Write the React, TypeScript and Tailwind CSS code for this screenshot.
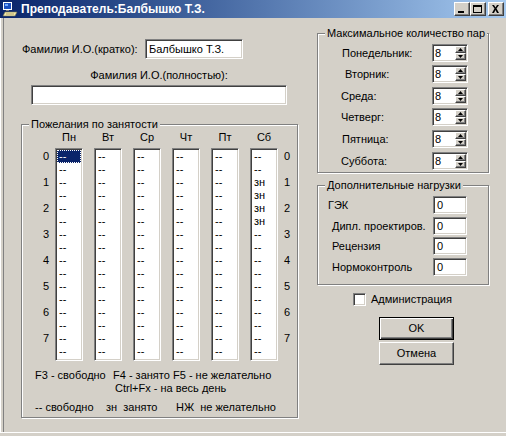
import React from 'react';

const days = ['Пн', 'Вт', 'Ср', 'Чт', 'Пт', 'Сб'];
const hours = [0, 1, 2, 3, 4, 5, 6, 7];

const sunken =
  'border border-t-[#808080] border-l-[#808080] border-b-white border-r-white shadow-[inset_1px_1px_#404040,inset_-1px_-1px_#d4d0c8]';
const raised =
  'border border-t-white border-l-white border-b-[#404040] border-r-[#404040] shadow-[inset_-1px_-1px_#808080]';
const etched = 'border border-[#808080] shadow-[1px_1px_#fff,inset_1px_1px_#fff]';

const maxRows = [
  { label: 'Понедельник:', pad: 'pl-[24px]', gap: 'mt-0' },
  { label: 'Вторник:', pad: 'pl-[27px]', gap: 'mt-[3px]' },
  { label: 'Среда:', pad: 'pl-[23px]', gap: 'mt-[4px]' },
  { label: 'Четверг:', pad: 'pl-[23px]', gap: 'mt-[3px]' },
  { label: 'Пятница:', pad: 'pl-[24px]', gap: 'mt-[4px]' },
  { label: 'Суббота:', pad: 'pl-[23px]', gap: 'mt-[4px]' },
];

const extraRows = [
  { label: 'ГЭК', pad: 'pl-[10px]', gap: 'mt-0' },
  { label: 'Дипл. проектиров.', pad: 'pl-[14px]', gap: 'mt-[3px]' },
  { label: 'Рецензия', pad: 'pl-[14px]', gap: 'mt-[2px]' },
  { label: 'Нормоконтроль', pad: 'pl-[14px]', gap: 'mt-[3px]' },
];

function cells(day: string) {
  return Array.from({ length: 16 }, (_, i) => (day === 'Сб' && i >= 2 && i <= 5 ? 'зн' : '--'));
}

function TitleIcon() {
  return (
    <svg width="16" height="16" viewBox="0 0 16 16">
      <rect x="1" y="1" width="9" height="8" fill="#fff" />
      <rect x="2" y="2" width="7" height="6" fill="#1a4fc0" />
      <rect x="3" y="3" width="3" height="2" fill="#6fa8ff" />
      <rect x="4" y="9" width="3" height="1" fill="#808080" />
      <polygon points="3,11 15,11 13,15 1,15" fill="#f4e9a8" stroke="#707050" strokeWidth="0.6" />
      <line x1="4" y1="13" x2="12" y2="13" stroke="#a09060" strokeWidth="0.8" />
    </svg>
  );
}

function CaptionButton({ kind }: { kind: 'min' | 'max' | 'close' }) {
  return (
    <div className={`w-[16px] h-[14px] bg-[#d4d0c8] ${raised} flex items-center justify-center`}>
      <svg width="12" height="10" viewBox="0 0 12 10">
        {kind === 'min' && <rect x="2" y="7" width="6" height="2" fill="#000" />}
        {kind === 'max' && (
          <>
            <rect x="1.5" y="1.5" width="8" height="7" fill="none" stroke="#000" strokeWidth="1" />
            <rect x="1" y="1" width="9" height="2" fill="#000" />
          </>
        )}
        {kind === 'close' && (
          <path d="M2 1 L4 1 L5.5 3.5 L7 1 L9 1 L6.5 4.5 L9 9 L7 9 L5.5 6 L4 9 L2 9 L4.5 4.5 Z" fill="#000" />
        )}
      </svg>
    </div>
  );
}

function SpinBox() {
  return (
    <div className={`w-[36px] h-[18px] bg-white ${sunken} p-[1px] flex`}>
      <div className="flex-1 pl-[1px] leading-[14px]">8</div>
      <div className="w-[11px] flex flex-col">
        <div className={`flex-1 bg-[#d4d0c8] ${raised} flex items-center justify-center`}>
          <svg width="5" height="3" viewBox="0 0 5 3">
            <polygon points="2.5,0 5,3 0,3" fill="#000" />
          </svg>
        </div>
        <div className={`flex-1 bg-[#d4d0c8] ${raised} flex items-center justify-center`}>
          <svg width="5" height="3" viewBox="0 0 5 3">
            <polygon points="0,0 5,0 2.5,3" fill="#000" />
          </svg>
        </div>
      </div>
    </div>
  );
}

function GroupTitle({ children }: { children: React.ReactNode }) {
  return (
    <span className="absolute -top-[7px] left-[7px] px-[2px] bg-[#d4d0c8] leading-[13px] whitespace-nowrap">
      {children}
    </span>
  );
}

export default function App() {
  return (
    <div className="w-[506px] h-[436px] bg-[#d4d0c8] flex flex-col overflow-hidden text-[11px] leading-[13px] text-black font-['Liberation_Sans',Arial,sans-serif]">
      {/* Title bar */}
      <div className="h-[18px] shrink-0 flex items-center bg-gradient-to-r from-[#0a246a] to-[#a6caf0] pl-[2px] pr-[2px]">
        <TitleIcon />
        <div className="ml-[3px] font-bold text-white text-[12px] whitespace-nowrap">Преподаватель:Балбышко Т.З.</div>
        <div className="ml-auto flex items-center">
          <CaptionButton kind="min" />
          <CaptionButton kind="max" />
          <div className="ml-[2px]">
            <CaptionButton kind="close" />
          </div>
        </div>
      </div>

      {/* Body */}
      <div className="h-[414px] shrink-0 flex shadow-[inset_1px_0_#fff,inset_3px_0_#d4d0c8,inset_4px_0_#808080]">
        {/* Left column */}
        <div className="w-[300px] shrink-0 pl-[21px]">
          <div className="mt-[21px] h-[20px] flex items-center">
            <div className="w-[124px] pl-[1px] whitespace-nowrap">Фамилия И.О.(кратко):</div>
            <div className={`w-[98px] h-[20px] bg-white ${sunken} pl-[3px] flex items-center`}>Балбышко Т.З.</div>
          </div>
          <div className="ml-[10px] w-[256px]">
            <div className="mt-[10px] text-center">Фамилия И.О.(полностью):</div>
            <div className={`mt-[3px] h-[20px] bg-white ${sunken}`} />
          </div>

          {/* Schedule wishes */}
          <div className={`relative mt-[19px] w-[277px] h-[294px] ${etched}`}>
            <GroupTitle>Пожелания по занятости</GroupTitle>
            <div className="pt-[6px] flex">
              <div className="w-[33px]" />
              <div className="flex gap-[11px]">
                {days.map((d) => (
                  <div key={d} className="w-[28px] text-center">
                    {d}
                  </div>
                ))}
              </div>
            </div>
            <div className="mt-[4px] flex">
              <div className="w-[33px] pt-[2px] pr-[6px] text-right">
                {hours.map((h) => (
                  <div key={h} className="h-[26px]">
                    {h}
                  </div>
                ))}
              </div>
              <div className="flex gap-[11px]">
                {days.map((d, di) => (
                  <div key={d} className={`w-[28px] h-[213px] bg-white ${sunken} p-[1px] overflow-hidden`}>
                    {cells(d).map((c, i) => (
                      <div
                        key={i}
                        className={
                          di === 0 && i === 0
                            ? 'h-[13px] pl-[2px] bg-[#0a246a] text-white outline-1 outline-dotted outline-white -outline-offset-1'
                            : 'h-[13px] pl-[2px] text-black'
                        }
                      >
                        {c}
                      </div>
                    ))}
                  </div>
                ))}
              </div>
              <div className="ml-[6px] pt-[2px]">
                {hours.map((h) => (
                  <div key={h} className="h-[26px]">
                    {h}
                  </div>
                ))}
              </div>
            </div>
            <div className="mt-[8px] pl-[13px] flex whitespace-nowrap">
              <div className="w-[78px]">F3 - свободно</div>
              <div className="w-[60px]">F4 - занято</div>
              <div>F5 - не желательно</div>
            </div>
            <div className="pl-[93px] whitespace-nowrap">Ctrl+Fx - на весь день</div>
            <div className="mt-[6px] pl-[13px] flex whitespace-pre">
              <div className="w-[71px]">-- свободно</div>
              <div className="w-[70px]">зн  занято</div>
              <div>НЖ  не желательно</div>
            </div>
          </div>
        </div>

        {/* Right column */}
        <div className="flex-1 flex flex-col">
          <div className={`relative ml-[17px] mt-[15px] w-[172px] h-[140px] ${etched} pt-[10px]`}>
            <GroupTitle>Максимальное количество пар</GroupTitle>
            {maxRows.map((r) => (
              <div key={r.label} className={`${r.gap} h-[18px] flex items-center`}>
                <div className={`w-[114px] ${r.pad} whitespace-nowrap`}>{r.label}</div>
                <SpinBox />
              </div>
            ))}
          </div>

          <div className={`relative ml-[17px] mt-[12px] w-[172px] h-[100px] ${etched} pt-[10px]`}>
            <GroupTitle>Дополнительные нагрузки</GroupTitle>
            {extraRows.map((r) => (
              <div key={r.label} className={`${r.gap} h-[18px] flex items-center`}>
                <div className={`w-[115px] ${r.pad} whitespace-nowrap`}>{r.label}</div>
                <div className={`w-[34px] h-[18px] bg-white ${sunken} pl-[3px] flex items-center`}>0</div>
              </div>
            ))}
          </div>

          <div className="mt-[8px] ml-[53px] flex items-center gap-[5px]">
            <div className={`w-[13px] h-[13px] bg-white ${sunken}`} />
            <div>Администрация</div>
          </div>

          <div className="ml-[79px] mt-[11px] flex flex-col gap-[2px]">
            <div className="w-[75px] h-[23px] bg-[#d4d0c8] border border-black shadow-[inset_1px_1px_#fff,inset_-1px_-1px_#404040,inset_-2px_-2px_#808080] flex items-center justify-center">
              OK
            </div>
            <div className={`w-[75px] h-[23px] bg-[#d4d0c8] ${raised} flex items-center justify-center`}>Отмена</div>
          </div>
        </div>
      </div>
      <div className="h-px shrink-0 bg-white" />
    </div>
  );
}
